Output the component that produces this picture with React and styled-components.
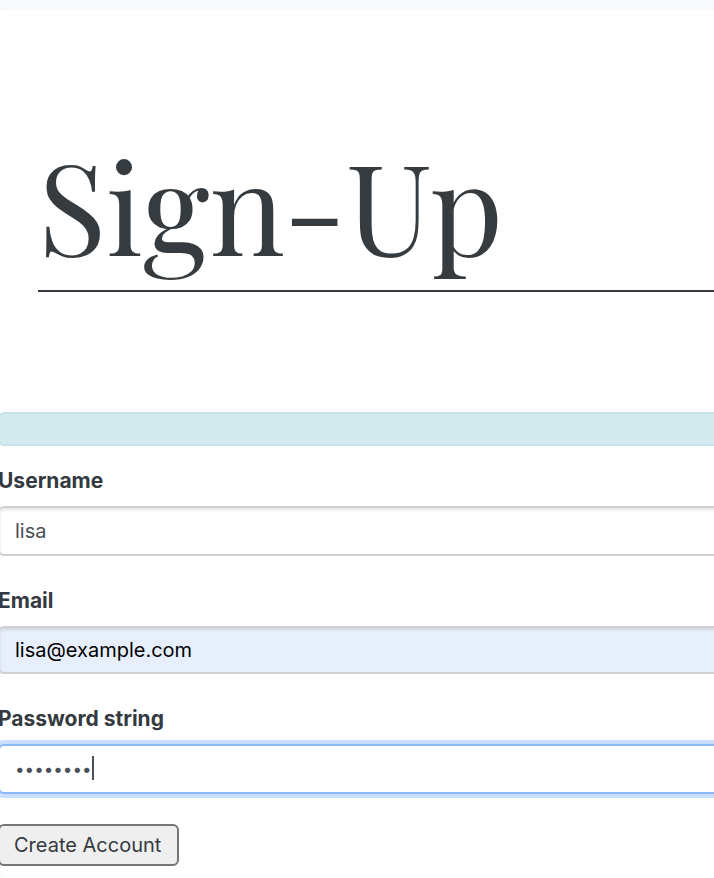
import React, { useState } from "react";
import styled, { createGlobalStyle } from "styled-components";

const GlobalStyle = createGlobalStyle`
  *, *::before, *::after { box-sizing: border-box; }
  body {
    margin: 0;
    background: #f7f9fc;
    color: #343a40;
    font-family: Inter, "Liberation Sans", sans-serif;
    font-size: 20px;
    line-height: 30px;
    overflow-x: hidden;
  }
`;

const Page = styled.div`
  min-height: 100vh;
  padding-top: 10px;
  overflow: hidden;
`;

const Card = styled.main`
  min-height: calc(100vh - 10px);
  margin: 0 -8px 0 -2px;
  background: #fff;
  border-radius: 6px;
`;

const Header = styled.header`
  padding: 132px 0 120px 40px;
`;

const Title = styled.h1`
  margin: 0;
  padding-bottom: 24px;
  border-bottom: 2px solid #343a40;
  color: #353b3f;
  font-family: "Playfair Display", "Liberation Serif", serif;
  font-size: 126px;
  font-weight: 400;
  line-height: 124px;
`;

const Alert = styled.div`
  height: 34px;
  border: 2px solid #c5e4ea;
  border-radius: 6px;
  background: #d5eaef;
`;

const Form = styled.form`
  display: flex;
  flex-direction: column;
  gap: 30px;
  padding-top: 20px;
`;

const Field = styled.div`
  display: flex;
  flex-direction: column;
  gap: 10px;
`;

const Label = styled.label`
  font-size: 21px;
  font-weight: 700;
`;

const InputWrap = styled.div`
  position: relative;
  display: flex;
`;

const Input = styled.input`
  width: 100%;
  height: ${(p) => (p.$filled ? 48 : 50)}px;
  padding: 0 15px;
  border: 2px solid ${(p) => (p.$active ? "#8bb9fb" : "#ced2d6")};
  border-radius: 6px;
  outline: none;
  background: ${(p) => (p.$filled ? "#e8effc" : "#fff")};
  box-shadow: ${(p) =>
    p.$active ? "0 0 0 4px #cbdefd" : "inset 0 2px 3px rgba(0, 0, 0, 0.1)"};
  color: ${(p) => (p.$filled ? "#000" : "#495057")};
  font: inherit;

  &[type="password"] {
    font-size: 17px;
  }
`;

const Caret = styled.span`
  position: absolute;
  top: 12px;
  left: 94px;
  width: 2px;
  height: 24px;
  background: #495057;
`;

const Button = styled.button`
  align-self: flex-start;
  height: 42px;
  padding: 0 16px 0 14px;
  border: 2px solid #767676;
  border-radius: 6px;
  background: #efefef;
  color: #343a40;
  font: inherit;
`;

const FIELDS = [
  { id: "username", label: "Username", type: "text" },
  { id: "email", label: "Email", type: "email", filled: true },
  { id: "password", label: "Password string", type: "password", active: true },
];

export default function App() {
  const [values, setValues] = useState({
    username: "lisa",
    email: "lisa@example.com",
    password: "password",
  });

  return (
    <>
      <GlobalStyle />
      <Page>
        <Card>
          <Header>
            <Title>Sign-Up</Title>
          </Header>
          <Alert role="status" />
          <Form onSubmit={(e) => e.preventDefault()}>
            {FIELDS.map(({ id, label, type, filled, active }) => (
              <Field key={id}>
                <Label htmlFor={id}>{label}</Label>
                <InputWrap>
                  <Input
                    id={id}
                    type={type}
                    value={values[id]}
                    $filled={filled}
                    $active={active}
                    onChange={(e) => setValues({ ...values, [id]: e.target.value })}
                  />
                  {active && <Caret aria-hidden="true" />}
                </InputWrap>
              </Field>
            ))}
            <Button type="submit">Create Account</Button>
          </Form>
        </Card>
      </Page>
    </>
  );
}
